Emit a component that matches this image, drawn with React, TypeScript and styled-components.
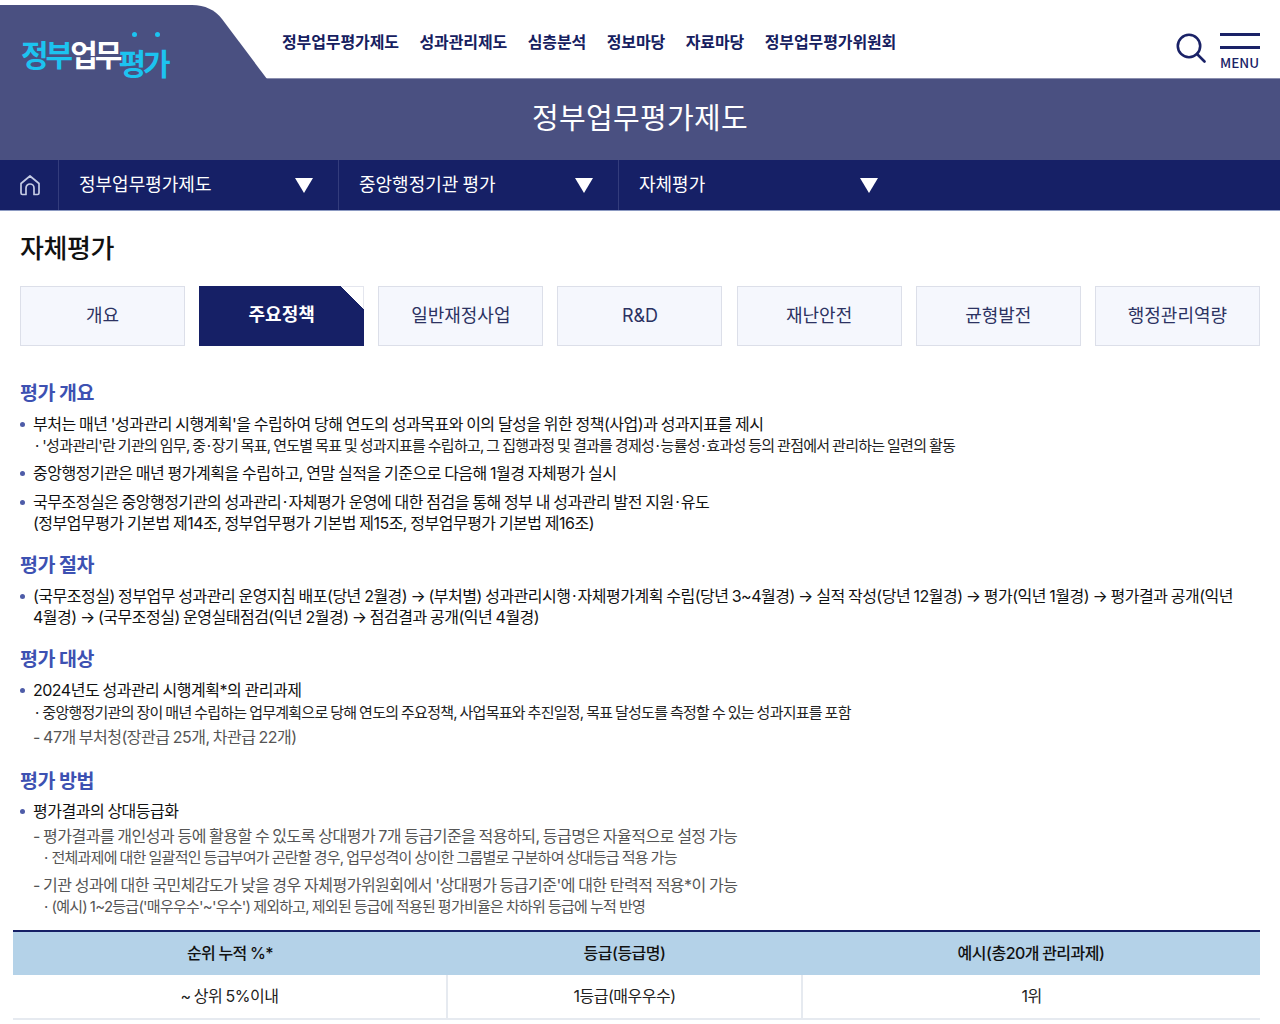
import React from "react";
import styled, { createGlobalStyle } from "styled-components";

const Global = createGlobalStyle`
  html, body { margin: 0; padding: 0; background: #fff; }
  body {
    font-family: Inter, "Noto Sans CJK KR", sans-serif;
    color: #111;
  }
  * { box-sizing: border-box; }
`;
const Page = styled.div`
  width: 1280px;
  height: 1024px;
  overflow: hidden;
`;
const TopBar = styled.header`
  position: relative;
  height: 78px;
  display: flex;
  align-items: flex-start;
  padding-left: 282px;
  background: #fff;
`;
const LogoShape = styled.svg`
  position: absolute;
  left: 0;
  top: 0;
`;
const LogoText = styled.div`
  position: absolute;
  left: 21px;
  top: 33px;
  display: flex;
  align-items: flex-start;
  font-family: "Noto Sans CJK KR", sans-serif;
  font-weight: 700;
  font-size: 30px;
  line-height: 40px;
  letter-spacing: -3px;
`;
const LogoPart = styled.span<{ $c: string; $down?: boolean }>`
  color: ${(p) => p.$c};
  margin-top: ${(p) => (p.$down ? "9px" : "0")};
  margin-left: ${(p) => (p.$down ? "-1px" : "0")};
`;
const LogoDot = styled.i<{ $x: number }>`
  position: absolute;
  top: 32px;
  left: ${(p) => p.$x}px;
  width: 5px;
  height: 5px;
  border-radius: 50%;
  background: #1cc3f0;
`;
const Gnb = styled.nav`
  display: flex;
  gap: 20.5px;
  margin-top: 29px;
`;
const GnbItem = styled.a`
  font-family: "Noto Sans CJK KR", sans-serif;
  font-size: 16px;
  font-weight: 700;
  line-height: 24px;
  letter-spacing: -0.1px;
  color: #16205f;
`;
const Tools = styled.div`
  position: absolute;
  right: 20px;
  top: 33px;
  display: flex;
  align-items: flex-start;
  gap: 14px;
`;
const MenuBtn = styled.div`
  width: 40px;
  display: flex;
  flex-direction: column;
  gap: 10px;
`;
const MenuLine = styled.i`
  display: block;
  height: 3px;
  background: #1a2267;
`;
const MenuLabel = styled.span`
  font-family: "Noto Sans CJK KR", sans-serif;
  font-size: 13.5px;
  font-weight: 500;
  line-height: 16px;
  color: #1a2267;
  margin-top: -5px;
  white-space: nowrap;
`;
const Hero = styled.div`
  height: 82px;
  background: #4a5081;
  border-top: 1px solid #8a8eae;
  display: flex;
  align-items: center;
  justify-content: center;
  color: #fff;
  font-family: "Noto Sans CJK KR", sans-serif;
  font-size: 29px;
  letter-spacing: 0.3px;
  padding-bottom: 8px;
`;
const Crumbs = styled.div`
  height: 51px;
  background: #162066;
  border-bottom: 1px solid #8c9ac2;
  display: flex;
  padding-left: 1px;
`;
const HomeCell = styled.div`
  width: 58px;
  display: flex;
  align-items: center;
  justify-content: center;
  border-right: 1px solid #333c7c;
`;
const CrumbCell = styled.div`
  width: 280px;
  padding: 0 25px 4px 20px;
  display: flex;
  align-items: center;
  justify-content: space-between;
  color: #fff;
  font-family: "Noto Sans CJK KR", sans-serif;
  font-size: 18px;
  border-right: 1px solid #333c7c;
  &:last-child { border-right: none; width: 284px; }
`;
const Arrow = styled.i`
  width: 0;
  height: 0;
  border-left: 9px solid transparent;
  border-right: 9px solid transparent;
  border-top: 15px solid #fff;
  margin-top: 4px;
`;
const Main = styled.main`
  padding: 0 20px;
`;
const PageTitle = styled.h1`
  margin: 0;
  padding-top: 18px;
  font-family: "Noto Sans CJK KR", sans-serif;
  font-size: 26px;
  line-height: 36px;
  font-weight: 500;
  letter-spacing: -0.4px;
  color: #111;
`;
const Tabs = styled.div`
  display: grid;
  grid-template-columns: repeat(7, 165px);
  justify-content: space-between;
  margin-top: 21px;
`;
const Tab = styled.div<{ $on?: boolean }>`
  position: relative;
  height: 60px;
  display: flex;
  align-items: center;
  justify-content: center;
  font-size: 18px;
  line-height: 26px;
  padding-bottom: ${(p) => (p.$on ? "2px" : "1px")};
  color: ${(p) => (p.$on ? "#fff" : "#2c3262")};
  font-weight: ${(p) => (p.$on ? 700 : 400)};
  background: ${(p) => (p.$on ? "#162066" : "#f5f7fd")};
  border: ${(p) => (p.$on ? "0" : "1px solid #dcdfe9")};
  &::after {
    content: ${(p) => (p.$on ? '""' : "none")};
    position: absolute;
    top: 0;
    right: 0;
    width: 22px;
    height: 22px;
    background: linear-gradient(to bottom left, #fff 50%, transparent 50%);
    border-top: 1px solid #e4e6ee;
    border-right: 1px solid #e4e6ee;
  }
`;
const Section = styled.h2<{ $mt: number }>`
  margin: ${(p) => p.$mt}px 0 0;
  font-size: 19.5px;
  line-height: 28px;
  font-weight: 700;
  color: #3d51b2;
  letter-spacing: -0.5px;
`;
const Bullet = styled.div<{ $mt: number }>`
  position: relative;
  margin-top: ${(p) => p.$mt}px;
  padding-left: 13px;
  font-size: 16px;
  line-height: 21px;
  letter-spacing: -0.5px;
  word-spacing: -0.7px;
  word-break: keep-all;
  color: #111;
  &::before {
    content: "";
    position: absolute;
    left: 0;
    top: 8px;
    width: 5px;
    height: 5px;
    border-radius: 50%;
    background: #4e5ca8;
  }
`;
const Sub = styled.div<{ $mt: number }>`
  margin-top: ${(p) => p.$mt}px;
  padding-left: 15px;
  font-size: 15px;
  line-height: 20px;
  letter-spacing: -0.75px;
  word-spacing: -0.7px;
  color: #222;
`;
const Dash = styled.div<{ $mt: number }>`
  margin-top: ${(p) => p.$mt}px;
  padding-left: 13px;
  font-size: 16px;
  line-height: 21px;
  letter-spacing: -0.5px;
  word-spacing: -0.8px;
  color: #555;
`;
const SubGray = styled.div<{ $mt: number }>`
  margin-top: ${(p) => p.$mt}px;
  padding-left: 24px;
  font-size: 15px;
  line-height: 20px;
  letter-spacing: -0.75px;
  word-spacing: -0.6px;
  color: #555;
`;
const Mid = styled.span`
  margin: 0 1.5px;
`;
const Lead = styled.span`
  margin: 0 1px 0 0;
`;
const Table = styled.table`
  width: 1247px;
  margin: 13px 0 0 -7px;
  border-collapse: collapse;
  table-layout: fixed;
  border-top: 2px solid #162066;
`;
const Th = styled.th`
  height: 44px;
  background: #b4d2e8;
  font-size: 16px;
  font-weight: 500;
  letter-spacing: -0.5px;
  word-spacing: -0.7px;
  color: #111;
  padding: 0 0 3px;
`;
const Td = styled.td`
  height: 44px;
  font-size: 16px;
  letter-spacing: -0.5px;
  word-spacing: -0.7px;
  color: #222;
  text-align: center;
  padding: 0 0 3px;
  border-bottom: 2px solid #e6eaf0;
  border-right: 2px solid #e6eaf0;
  &:last-child { border-right: none; }
`;

const gnb = ["정부업무평가제도", "성과관리제도", "심층분석", "정보마당", "자료마당", "정부업무평가위원회"];
const tabs = ["개요", "주요정책", "일반재정사업", "R&D", "재난안전", "균형발전", "행정관리역량"];
const D = () => <Mid>·</Mid>;
const L = () => <Lead>·</Lead>;

export default function App() {
  return (
    <Page>
      <Global />
      <TopBar>
        <LogoShape width="270" height="79" viewBox="0 0 270 79">
          <path d="M0 5H192C205 5 215 10 222 19L267 79H0Z" fill="#4a5081" />
        </LogoShape>
        <LogoText>
          <LogoPart $c="#1cc3f0">정부</LogoPart>
          <LogoPart $c="#fff">업무</LogoPart>
          <LogoPart $c="#1cc3f0" $down>평가</LogoPart>
        </LogoText>
        <LogoDot $x={132} />
        <LogoDot $x={155} />
        <Gnb>
          {gnb.map((g) => (
            <GnbItem key={g}>{g}</GnbItem>
          ))}
        </Gnb>
        <Tools>
          <svg width="30" height="30" viewBox="0 0 30 30" fill="none" stroke="#1a2267">
            <circle cx="13" cy="13" r="11.2" strokeWidth="2.6" />
            <path d="M21 21L28.500 28.500" strokeWidth="2.6" strokeLinecap="round" />
          </svg>
          <MenuBtn>
            <MenuLine />
            <MenuLine />
            <MenuLabel>MENU</MenuLabel>
          </MenuBtn>
        </Tools>
      </TopBar>
      <Hero>정부업무평가제도</Hero>
      <Crumbs>
        <HomeCell>
          <svg width="22" height="22" viewBox="0 0 22 22" fill="none" stroke="#c5cce4" strokeWidth="1.7" strokeLinejoin="round">
            <path d="M2 9.500L11 2l9 7.500V19a1.500 1.500 0 0 1-1.500 1.500H15V14a4 4 0 0 0-8 0v6.500H3.500A1.500 1.500 0 0 1 2 19Z" />
          </svg>
        </HomeCell>
        <CrumbCell>정부업무평가제도<Arrow /></CrumbCell>
        <CrumbCell>중앙행정기관 평가<Arrow /></CrumbCell>
        <CrumbCell>자체평가<Arrow /></CrumbCell>
      </Crumbs>
      <Main>
        <PageTitle>자체평가</PageTitle>
        <Tabs>
          {tabs.map((t, i) => (
            <Tab key={t} $on={i === 1}>{t}</Tab>
          ))}
        </Tabs>
        <Section $mt={33}>평가 개요</Section>
        <Bullet $mt={7}>부처는 매년 '성과관리 시행계획'을 수립하여 당해 연도의 성과목표와 이의 달성을 위한 정책(사업)과 성과지표를 제시</Bullet>
        <Sub $mt={1}><L /> '성과관리'란 기관의 임무, 중<D />장기 목표, 연도별 목표 및 성과지표를 수립하고, 그 집행과정 및 결과를 경제성<D />능률성<D />효과성 등의 관점에서 관리하는 일련의 활동</Sub>
        <Bullet $mt={7}>중앙행정기관은 매년 평가계획을 수립하고, 연말 실적을 기준으로 다음해 1월경 자체평가 실시</Bullet>
        <Bullet $mt={8}>국무조정실은 중앙행정기관의 성과관리<D />자체평가 운영에 대한 점검을 통해 정부 내 성과관리 발전 지원<D />유도<br />(정부업무평가 기본법 제14조, 정부업무평가 기본법 제15조, 정부업무평가 기본법 제16조)</Bullet>
        <Section $mt={17}>평가 절차</Section>
        <Bullet $mt={7}>(국무조정실) 정부업무 성과관리 운영지침 배포(당년 2월경) → (부처별) 성과관리시행<D />자체평가계획 수립(당년 3~4월경) → 실적 작성(당년 12월경) → 평가(익년 1월경) → 평가결과 공개(익년 4월경) → (국무조정실) 운영실태점검(익년 2월경) → 점검결과 공개(익년 4월경)</Bullet>
        <Section $mt={17}>평가 대상</Section>
        <Bullet $mt={7}>2024년도 성과관리 시행계획*의 관리과제</Bullet>
        <Sub $mt={2}><L /> 중앙행정기관의 장이 매년 수립하는 업무계획으로 당해 연도의 주요정책, 사업목표와 추진일정, 목표 달성도를 측정할 수 있는 성과지표를 포함</Sub>
        <Dash $mt={4}>- 47개 부처청(장관급 25개, 차관급 22개)</Dash>
        <Section $mt={19}>평가 방법</Section>
        <Bullet $mt={6}>평가결과의 상대등급화</Bullet>
        <Dash $mt={4}>- 평가결과를 개인성과 등에 활용할 수 있도록 상대평가 7개 등급기준을 적용하되, 등급명은 자율적으로 설정 가능</Dash>
        <SubGray $mt={1}><L /> 전체과제에 대한 일괄적인 등급부여가 곤란할 경우, 업무성격이 상이한 그룹별로 구분하여 상대등급 적용 가능</SubGray>
        <Dash $mt={7}>- 기관 성과에 대한 국민체감도가 낮을 경우 자체평가위원회에서 '상대평가 등급기준'에 대한 탄력적 적용*이 가능</Dash>
        <SubGray $mt={1}><L /> (예시) 1~2등급('매우우수'~'우수') 제외하고, 제외된 등급에 적용된 평가비율은 차하위 등급에 누적 반영</SubGray>
        <Table>
          <colgroup>
            <col style={{ width: 434 }} />
            <col style={{ width: 355 }} />
            <col />
          </colgroup>
          <thead>
            <tr>
              <Th>순위 누적 %*</Th>
              <Th>등급(등급명)</Th>
              <Th>예시(총20개 관리과제)</Th>
            </tr>
          </thead>
          <tbody>
            <tr>
              <Td>~ 상위 5%이내</Td>
              <Td>1등급(매우우수)</Td>
              <Td>1위</Td>
            </tr>
          </tbody>
        </Table>
      </Main>
    </Page>
  );
}
